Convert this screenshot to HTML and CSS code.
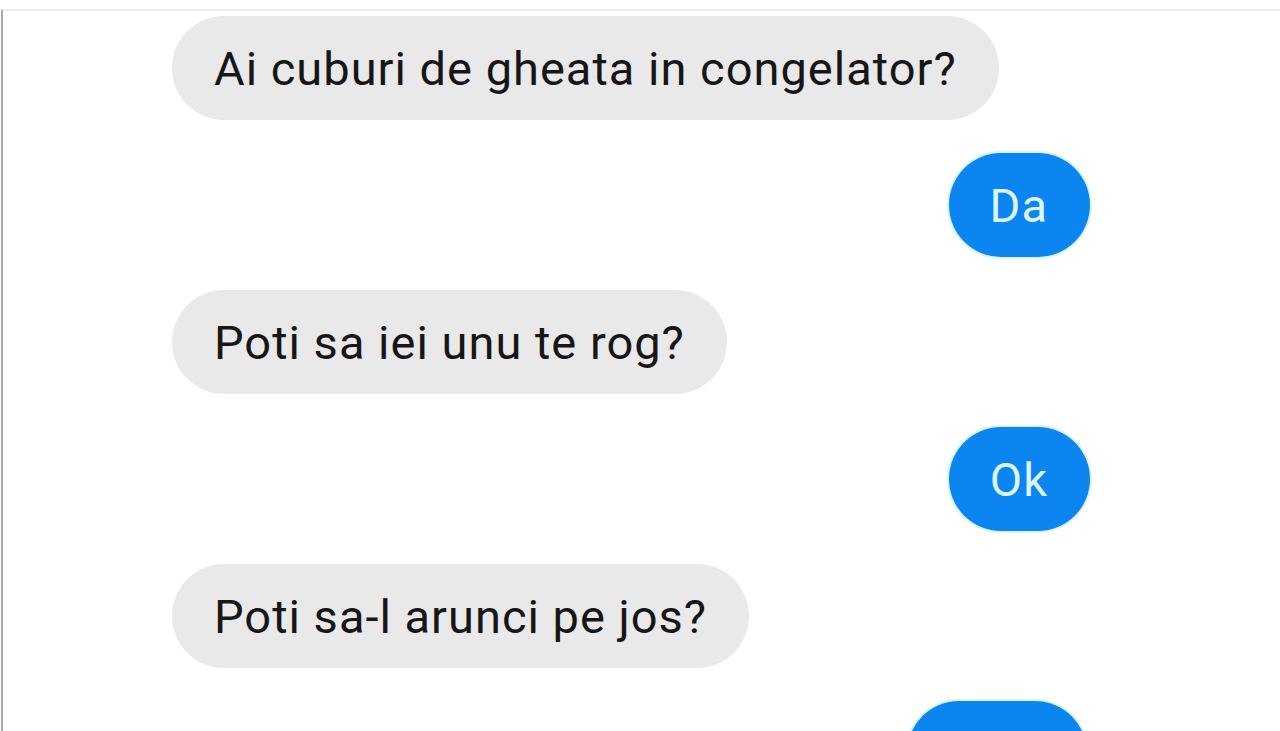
FILE: index.html
```html
<!DOCTYPE html>
<html lang="ro">
<head>
<meta charset="utf-8">
<title>Chat</title>
<link rel="stylesheet" href="styles.css">
</head>
<body>
<div class="frame">
  <div class="chat">
    <div class="row in"><div class="bubble gray">Ai cuburi de gheata in congelator?</div></div>
    <div class="row out"><div class="bubble blue">Da</div></div>
    <div class="row in"><div class="bubble gray">Poti sa iei unu te rog?</div></div>
    <div class="row out"><div class="bubble blue">Ok</div></div>
    <div class="row in"><div class="bubble gray">Poti sa-l arunci pe jos?</div></div>
    <div class="row out last"><div class="bubble blue empty"></div></div>
  </div>
</div>
</body>
</html>
```
FILE: styles.css
```css
html, body {
  margin: 0;
  padding: 0;
  background: #ffffff;
  height: 100%;
  overflow: hidden;
}
body {
  font-family: Roboto, "Liberation Sans", sans-serif;
  padding-top: 9px;
  padding-left: 1px;
  box-sizing: border-box;
}
.frame {
  border-top: 2px solid #ececec;
  border-left: 2px solid #a8a8a8;
  height: 100%;
  box-sizing: border-box;
  overflow: hidden;
}
.chat {
  display: flex;
  flex-direction: column;
  gap: 33px;
  padding-top: 5px;
}
.row {
  display: flex;
}
.row.in {
  padding-left: 169px;
}
.row.out {
  justify-content: flex-end;
  padding-right: 190px;
}
.bubble {
  height: 104px;
  display: flex;
  align-items: center;
  padding: 0 42px;
  border-radius: 52px;
  font-size: 47px;
  letter-spacing: 1px;
  box-sizing: border-box;
  white-space: nowrap;
}
.gray {
  background: #e9e9e9;
  color: #161616;
}
.blue {
  background: #0b85ef;
  color: #dcf6ff;
  padding: 0 42px 0 41px;
  box-shadow: 0 0 0 2px rgba(190, 235, 255, 0.55);
}
.row.last {
  padding-right: 193px;
}
.empty {
  width: 180px;
}
```
